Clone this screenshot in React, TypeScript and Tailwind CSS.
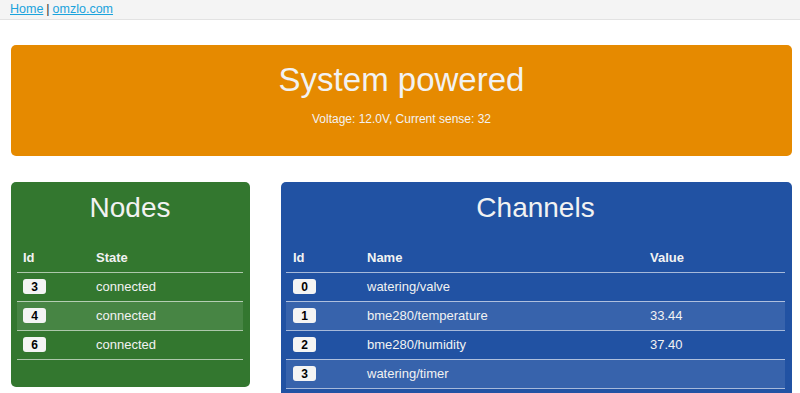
const nodes = [
  { id: 3, state: "connected" },
  { id: 4, state: "connected" },
  { id: 6, state: "connected" },
];

const channels = [
  { id: 0, name: "watering/valve", value: "" },
  { id: 1, name: "bme280/temperature", value: "33.44" },
  { id: 2, name: "bme280/humidity", value: "37.40" },
  { id: 3, name: "watering/timer", value: "" },
];

function Badge({ n }: { n: number }) {
  return (
    <span className="inline-flex h-[15px] w-[23px] items-center justify-center rounded-[3px] bg-[#f4f4f4] text-[12px] font-bold leading-none text-black">
      {n}
    </span>
  );
}

export default function App() {
  return (
    <div className="min-h-[393px] bg-white font-['Liberation_Sans',Arial,sans-serif] text-[#f2f2f2]">
      {/* top nav */}
      <div className="flex h-[20px] items-center border-b border-[#e2e2e2] bg-[#f4f4f4] pl-[10px] text-[12.5px] text-[#333]">
        <a href="#" className="text-[#1ba3dc] underline">Home</a>
        <span className="px-[3px]">|</span>
        <a href="#" className="text-[#1ba3dc] underline">omzlo.com</a>
      </div>

      <div className="pl-[11px] pr-[8px] pt-[25px]">
        {/* status banner */}
        <div className="rounded-[5px] bg-[#e68a00] pb-[29px] pt-[15px] text-center">
          <h1 className="text-[33px] leading-[40px]">System powered</h1>
          <p className="mt-[11px] text-[12px] leading-[16px]">Voltage: 12.0V, Current sense: 32</p>
        </div>

        <div className="mt-[26px] flex items-start gap-[31px]">
          {/* nodes */}
          <div className="w-[239px] shrink-0 rounded-[5px] bg-[#33772f] pb-[27px] pl-[6px] pr-[7px] pt-[8px]">
            <h2 className="text-center text-[28px] leading-[36px]">Nodes</h2>
            <table className="mt-[17px] w-full border-collapse text-left text-[13px]">
              <thead>
                <tr className="h-[29px] border-b border-white/60">
                  <th className="w-[73px] px-[6px] font-bold">Id</th>
                  <th className="px-[6px] font-bold">State</th>
                </tr>
              </thead>
              <tbody>
                {nodes.map((n, i) => (
                  <tr
                    key={n.id}
                    className={`h-[29px] border-b border-white/60 ${i % 2 === 1 ? "bg-white/10" : ""}`}
                  >
                    <td className="px-[6px] align-middle">
                      <Badge n={n.id} />
                    </td>
                    <td className="px-[6px]">{n.state}</td>
                  </tr>
                ))}
              </tbody>
            </table>
          </div>

          {/* channels */}
          <div className="flex-1 rounded-[5px] bg-[#2152a3] pb-[27px] pl-[5px] pr-[7px] pt-[8px]">
            <h2 className="text-center text-[28px] leading-[36px]">Channels</h2>
            <table className="mt-[17px] w-full border-collapse text-left text-[13px]">
              <thead>
                <tr className="h-[29px] border-b border-white/60">
                  <th className="w-[75px] px-[7px] font-bold">Id</th>
                  <th className="w-[283px] px-[6px] font-bold">Name</th>
                  <th className="px-[6px] font-bold">Value</th>
                </tr>
              </thead>
              <tbody>
                {channels.map((c, i) => (
                  <tr
                    key={c.id}
                    className={`h-[29px] border-b border-white/60 ${i % 2 === 1 ? "bg-white/10" : ""}`}
                  >
                    <td className="px-[7px] align-middle">
                      <Badge n={c.id} />
                    </td>
                    <td className="px-[6px]">{c.name}</td>
                    <td className="px-[6px]">{c.value}</td>
                  </tr>
                ))}
              </tbody>
            </table>
          </div>
        </div>
      </div>
    </div>
  );
}
